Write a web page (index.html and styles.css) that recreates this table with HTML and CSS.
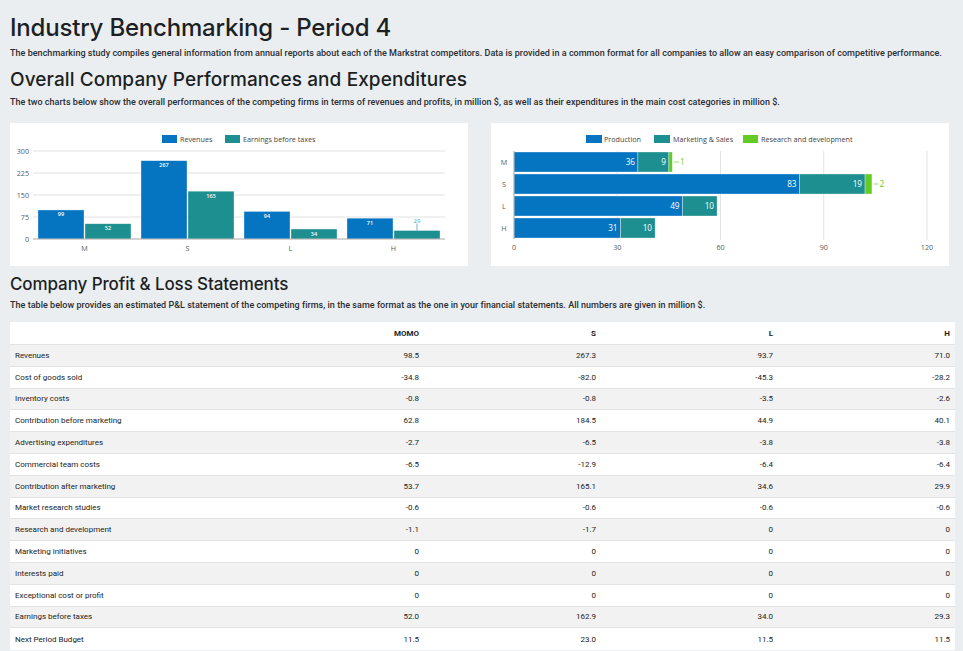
FILE: index.html
```html
<!DOCTYPE html>
<html lang="en">
<head>
<meta charset="utf-8">
<title>Industry Benchmarking - Period 4</title>
<link rel="stylesheet" href="styles.css">
</head>
<body>
<h1 class="title">Industry Benchmarking - Period 4</h1>
<p class="intro">The benchmarking study compiles general information from annual reports about each of the Markstrat competitors. Data is provided in a common format for all companies to allow an easy comparison of competitive performance.</p>
<h2 class="section">Overall Company Performances and Expenditures</h2>
<p class="intro">The two charts below show the overall performances of the competing firms in terms of revenues and profits, in million $, as well as their expenditures in the main cost categories in million $.</p>

<div class="charts">
  <div class="card">
    <svg class="chart" width="458" height="143" viewBox="0 0 458 143">
      <g class="legend">
        <rect x="152" y="12" width="15" height="8" class="c-blue"/>
        <text x="170" y="18.7">Revenues</text>
        <rect x="215" y="12" width="15" height="8" class="c-teal"/>
        <text x="233" y="18.7">Earnings before taxes</text>
      </g>
      <g class="grid">
        <line x1="23" y1="28" x2="435" y2="28"/>
        <line x1="23" y1="50" x2="435" y2="50"/>
        <line x1="23" y1="72" x2="435" y2="72"/>
        <line x1="23" y1="94" x2="435" y2="94"/>
      </g>
      <g class="axis-label" text-anchor="end">
        <text x="19" y="30.5">300</text>
        <text x="19" y="52.5">225</text>
        <text x="19" y="74.5">150</text>
        <text x="19" y="96.5">75</text>
        <text x="19" y="118.5">0</text>
      </g>
      <g class="bars">
        <rect x="28" y="86.96" width="46" height="29.04" class="c-blue"/>
        <rect x="75" y="100.75" width="46" height="15.25" class="c-teal"/>
        <rect x="131" y="37.68" width="46" height="78.32" class="c-blue"/>
        <rect x="178" y="68.19" width="46" height="47.81" class="c-teal"/>
        <rect x="234" y="88.43" width="46" height="27.57" class="c-blue"/>
        <rect x="281" y="106.03" width="46" height="9.97" class="c-teal"/>
        <rect x="337" y="95.17" width="46" height="20.83" class="c-blue"/>
        <rect x="384" y="107.49" width="46" height="8.51" class="c-teal"/>
      </g>
      <line x1="23" y1="116" x2="435" y2="116" class="axis"/>
      <g class="bar-value" text-anchor="middle">
        <text x="51" y="93.2">99</text>
        <text x="98" y="107">52</text>
        <text x="154" y="44">267</text>
        <text x="201" y="74.5">163</text>
        <text x="257" y="94.7">94</text>
        <text x="304" y="113.2">34</text>
        <text x="360" y="101.5">71</text>
      </g>
      <line x1="407" y1="100.5" x2="407" y2="107.5" class="leader-teal"/>
      <text x="407" y="99.8" text-anchor="middle" class="out-teal">29</text>
      <g class="axis-label" text-anchor="middle">
        <text x="74.5" y="127.5">M</text>
        <text x="177.5" y="127.5">S</text>
        <text x="280.5" y="127.5">L</text>
        <text x="383.5" y="127.5">H</text>
      </g>
    </svg>
  </div>

  <div class="card">
    <svg class="chart" width="458" height="143" viewBox="0 0 458 143">
      <g class="legend">
        <rect x="95" y="12" width="16" height="8" class="c-blue"/>
        <text x="113" y="18.7">Production</text>
        <rect x="163" y="12" width="16" height="8" class="c-teal"/>
        <text x="182" y="18.7">Marketing &amp; Sales</text>
        <rect x="252" y="12" width="15" height="8" class="c-green"/>
        <text x="270" y="18.7">Research and development</text>
      </g>
      <g class="grid">
        <line x1="126.25" y1="28" x2="126.25" y2="117"/>
        <line x1="229.5" y1="28" x2="229.5" y2="117"/>
        <line x1="332.75" y1="28" x2="332.75" y2="117"/>
        <line x1="436" y1="28" x2="436" y2="117"/>
      </g>
      <g class="bars">
        <rect x="23" y="29" width="123.9" height="20" class="c-blue"/>
        <rect x="146.9" y="29" width="30.98" height="20" class="c-teal"/>
        <rect x="177.88" y="29" width="3.44" height="20" class="c-green"/>
        <rect x="23" y="51" width="285.66" height="20" class="c-blue"/>
        <rect x="308.66" y="51" width="65.39" height="20" class="c-teal"/>
        <rect x="374.05" y="51" width="6.88" height="20" class="c-green"/>
        <rect x="23" y="73" width="168.64" height="20" class="c-blue"/>
        <rect x="191.64" y="73" width="34.42" height="20" class="c-teal"/>
        <rect x="23" y="95" width="106.69" height="20" class="c-blue"/>
        <rect x="129.69" y="95" width="34.42" height="20" class="c-teal"/>
      </g>
      <line x1="23" y1="28" x2="23" y2="116" class="axis"/>
      <g class="bar-value big" text-anchor="end">
        <text x="144" y="42">36</text>
        <text x="175" y="42">9</text>
        <text x="305.5" y="64">83</text>
        <text x="371" y="64">19</text>
        <text x="188.5" y="86">49</text>
        <text x="223" y="86">10</text>
        <text x="126.5" y="108">31</text>
        <text x="161" y="108">10</text>
      </g>
      <line x1="183" y1="39" x2="188" y2="39" class="leader-green"/>
      <text x="189" y="42" class="out-green">1</text>
      <line x1="382.5" y1="61" x2="387.5" y2="61" class="leader-green"/>
      <text x="388.5" y="64" class="out-green">2</text>
      <g class="axis-label" text-anchor="middle">
        <text x="13" y="41.5">M</text>
        <text x="13" y="63.5">S</text>
        <text x="13" y="85.5">L</text>
        <text x="13" y="107.5">H</text>
        <text x="23" y="126.5">0</text>
        <text x="126.25" y="126.5">30</text>
        <text x="229.5" y="126.5">60</text>
        <text x="332.75" y="126.5">90</text>
        <text x="436" y="126.5">120</text>
      </g>
    </svg>
  </div>
</div>

<h3 class="subsection">Company Profit &amp; Loss Statements</h3>
<p class="intro">The table below provides an estimated P&amp;L statement of the competing firms, in the same format as the one in your financial statements. All numbers are given in million $.</p>

<table class="pl">
  <colgroup>
    <col class="col-label"><col class="col-num"><col class="col-num"><col class="col-num"><col class="col-num">
  </colgroup>
  <thead>
    <tr><th></th><th>MOMO</th><th>S</th><th>L</th><th>H</th></tr>
  </thead>
  <tbody>
    <tr><td>Revenues</td><td>98.5</td><td>267.3</td><td>93.7</td><td>71.0</td></tr>
    <tr><td>Cost of goods sold</td><td>-34.8</td><td>-82.0</td><td>-45.3</td><td>-28.2</td></tr>
    <tr><td>Inventory costs</td><td>-0.8</td><td>-0.8</td><td>-3.5</td><td>-2.6</td></tr>
    <tr><td>Contribution before marketing</td><td>62.8</td><td>184.5</td><td>44.9</td><td>40.1</td></tr>
    <tr><td>Advertising expenditures</td><td>-2.7</td><td>-6.5</td><td>-3.8</td><td>-3.8</td></tr>
    <tr><td>Commercial team costs</td><td>-6.5</td><td>-12.9</td><td>-6.4</td><td>-6.4</td></tr>
    <tr><td>Contribution after marketing</td><td>53.7</td><td>165.1</td><td>34.6</td><td>29.9</td></tr>
    <tr><td>Market research studies</td><td>-0.6</td><td>-0.6</td><td>-0.6</td><td>-0.6</td></tr>
    <tr><td>Research and development</td><td>-1.1</td><td>-1.7</td><td>0</td><td>0</td></tr>
    <tr><td>Marketing initiatives</td><td>0</td><td>0</td><td>0</td><td>0</td></tr>
    <tr><td>Interests paid</td><td>0</td><td>0</td><td>0</td><td>0</td></tr>
    <tr><td>Exceptional cost or profit</td><td>0</td><td>0</td><td>0</td><td>0</td></tr>
    <tr><td>Earnings before taxes</td><td>52.0</td><td>162.9</td><td>34.0</td><td>29.3</td></tr>
    <tr><td>Next Period Budget</td><td>11.5</td><td>23.0</td><td>11.5</td><td>11.5</td></tr>
  </tbody>
</table>
</body>
</html>
```

FILE: styles.css
```css
html, body {
  margin: 0;
  padding: 0;
}
body {
  background: #eaeef1;
  padding: 0 8px 0 10px;
  color: #1f2226;
  font-family: Roboto, "Liberation Sans", sans-serif;
  overflow: hidden;
}
.title {
  margin: 13px 0 0;
  font-family: Inter, "Open Sans", sans-serif;
  font-weight: 500;
  font-size: 24px;
  line-height: 30px;
  letter-spacing: -0.2px;
  color: #1c1f23;
}
.section {
  margin: 9px 0 0;
  font-family: Inter, "Open Sans", sans-serif;
  font-weight: 500;
  font-size: 19px;
  line-height: 24px;
  letter-spacing: 0.1px;
  color: #1c1f23;
}
.subsection {
  margin: 6px 0 0;
  font-family: Inter, "Open Sans", sans-serif;
  font-weight: 500;
  font-size: 17px;
  line-height: 24px;
  letter-spacing: -0.1px;
  color: #1c1f23;
}
.intro {
  margin: 4px 0 0;
  font-size: 9px;
  line-height: 12px;
  font-weight: 500;
  letter-spacing: 0.03px;
  color: #2a2d31;
}
.subsection + .intro { margin-top: 3px; }
.charts {
  display: flex;
  gap: 23px;
  margin-top: 15px;
  width: 939px;
}
.card {
  background: #fff;
  width: 458px;
  height: 143px;
}
.chart {
  display: block;
  font-family: "Open Sans", sans-serif;
}
.c-blue { fill: #0675c1; }
.c-teal { fill: #1e8f90; }
.c-green { fill: #63cb24; }
.bars rect { stroke: rgba(255,255,255,0.55); stroke-width: 0.6; }
.legend text { font-size: 7.2px; fill: #444; }
.grid line { stroke: #e2e2e2; stroke-width: 1; }
.axis { stroke: #a8a8a8; stroke-width: 1; }
.axis-label text, .axis-label { font-size: 7.2px; fill: #5c5c5c; }
.bar-value { font-size: 5.5px; fill: #fff; font-weight: 600; }
.bar-value.big { font-size: 8.2px; font-weight: 400; }
.leader-teal { stroke: #4aa9aa; stroke-width: 0.8; }
.out-teal { font-size: 6px; fill: #4aa9aa; }
.leader-green { stroke: #7fd24a; stroke-width: 0.8; }
.out-green { font-size: 8.2px; fill: #63cb24; }

.pl {
  margin-top: 11px;
  width: 945px;
  border-collapse: collapse;
  table-layout: fixed;
  font-size: 8px;
  font-weight: 400;
  color: #222;
}
.col-label { width: 237px; }
.col-num { width: 177px; }
.pl th, .pl td {
  padding: 0 5px;
  text-align: right;
  white-space: nowrap;
}
.pl th {
  height: 22px;
  background: #fff;
  font-weight: 700;
  color: #222;
}
.pl td {
  height: 21.8px;
  border-top: 1px solid #e3e3e3;
  box-sizing: border-box;
}
.pl td:first-child {
  text-align: left;
}
.pl tbody tr:nth-child(odd) { background: #f2f2f2; }
.pl tbody tr:nth-child(even) { background: #fff; }
```
